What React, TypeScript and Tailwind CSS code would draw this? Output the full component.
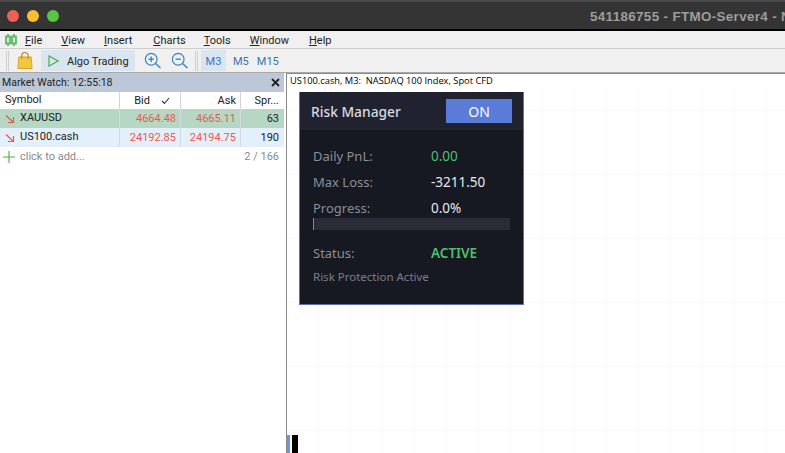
const menus = [
	["F", "ile", "mr-[19px]"],
	["V", "iew", "mr-[19px]"],
	["I", "nsert", "mr-[21px]"],
	["C", "harts", "mr-[18px]"],
	["T", "ools", "mr-[19px]"],
	["W", "indow", "mr-[20px]"],
	["H", "elp", ""]
]

const Zoom = ({ plus }: { plus?: boolean }) => (
	<svg width="18" height="18" viewBox="0 0 20 20" fill="none" stroke="#3f7fb8" strokeWidth="1.3">
		<circle cx="8" cy="8" r="6.5" fill="#eaf3fb" />
		<path d="M5 8h6" strokeWidth="1.5" />
		{plus && <path d="M8 5v6" strokeWidth="1.5" />}
		<path d="M12.8 12.8l5.5 5" strokeWidth="1.6" />
	</svg>
)

const Down = () => (
	<svg width="10" height="10" viewBox="0 0 10 10" fill="none" stroke="#e8554a" strokeWidth="1.1" className="shrink-0">
		<path d="M1 1.5l7 6.5M8.5 3v5.5H3" />
	</svg>
)

const Sep = () => <div className="mx-[2px] h-[20px] w-[3px] border-x border-[#cfcfcf]" />

const Row = ({ symbol, bid, ask, spread, className }: { symbol: string; bid: string; ask: string; spread: string; className: string }) => (
	<div className={`flex h-[19px] items-center text-[11px] ${className}`}>
		<div className="flex w-[119px] items-center pl-[5px]">
			<Down />
			<span className="pl-[5px] text-[#222]">{symbol}</span>
		</div>
		<div className="w-[61px] border-l border-[#d4dbe0] pr-[4px] text-right leading-[19px] text-[#f0584c]">{bid}</div>
		<div className="w-[60px] border-l border-[#d4dbe0] pr-[4px] text-right leading-[19px] text-[#f0584c]">{ask}</div>
		<div className="w-[44px] border-l border-[#d4dbe0] pr-[5px] text-right leading-[19px] text-[#222]">{spread}</div>
	</div>
)

const Stat = ({ label, value, className, labelClass }: { label: string; value: string; className: string; labelClass?: string }) => (
	<div className={`flex items-center ${labelClass ?? ""}`}>
		<div className="w-[118px] pt-[2px] text-[13px] text-[#8b8e98]">{label}</div>
		<div className={`text-[13.5px] ${className}`}>{value}</div>
	</div>
)

const RiskManager = () => (
	<div className="absolute left-[12px] top-[18px] h-[213px] w-[225px] border border-t-0 border-[#5a70b0] bg-[#161922] font-['Noto_Sans',sans-serif]">
		<div className="flex h-[38px] items-center justify-between bg-[#20232f] pl-[11px] pr-[11px]">
			<span className="pt-[3px] text-[13.8px] font-medium text-[#d8dae0]">Risk Manager</span>
			<div className="flex h-[24px] w-[66px] items-center justify-center bg-[#5a7bd8] text-[14px] text-white">ON</div>
		</div>
		<div className="flex flex-col px-[13px]">
			<Stat label="Daily PnL:" value="0.00" className="text-[#4fc06e]" labelClass="mt-[16px] h-[20px]" />
			<Stat label="Max Loss:" value="-3211.50" className="text-[#e8e9ec]" labelClass="mt-[6px] h-[20px]" />
			<Stat label="Progress:" value="0.0%" className="text-[#e8e9ec]" labelClass="mt-[7px] h-[18px]" />
			<div className="mt-[1px] h-[12px] w-[197px] border-l border-[#45b565] bg-[#292c37]" />
			<Stat label="Status:" value="ACTIVE" className="font-semibold text-[#4fc06e]" labelClass="mt-[13px] h-[20px]" />
			<div className="mt-[5px] text-[11.5px] text-[#7b7e89]">Risk Protection Active</div>
		</div>
	</div>
)

export default function App() {
	return (
		<div className="flex h-[453px] w-[785px] flex-col overflow-hidden bg-white font-['Roboto',sans-serif] text-[#222]">
			{/* title bar */}
			<div className="relative flex h-[31px] shrink-0 items-center gap-[8px] border-y-2 border-t-[#4a4a4a] border-b-black bg-[#343434] pl-[7px]">
				<span className="h-[12px] w-[12px] rounded-full bg-[#ee5f57]" />
				<span className="h-[12px] w-[12px] rounded-full bg-[#fdbd2e]" />
				<span className="h-[12px] w-[12px] rounded-full bg-[#58c544]" />
				<span className="absolute left-[590px] top-[5px] whitespace-nowrap font-['Liberation_Sans',sans-serif] text-[13.4px] font-bold tracking-[0.35px] text-[#9d9d9d]">
					541186755 - FTMO-Server4 - N
				</span>
			</div>

			{/* menu */}
			<div className="flex h-[18px] shrink-0 items-center border-b border-[#cfcfcf] bg-[#f0f0f0] text-[11px]">
				<svg width="16" height="14" viewBox="0 0 16 14" className="ml-[3px]" fill="none" stroke="#5fb56a" strokeWidth="1.8">
					<path d="M5 1v12M11 1v12" />
					<rect x="3" y="3.5" width="4" height="7" fill="#cfeccf" />
					<rect x="9" y="3.5" width="4" height="7" fill="#cfeccf" />
				</svg>
				<div className="ml-[6px] flex pt-[3px]">
					{menus.map(([key, rest, gap]) => (
						<span key={key} className={`whitespace-nowrap ${gap}`}>
							<span className="underline">{key}</span>
							{rest}
						</span>
					))}
				</div>
			</div>

			{/* toolbar */}
			<div className="flex h-[24px] shrink-0 items-center border-b border-[#a8a8a8] bg-[#f0f0f0] pl-[4px] text-[11px]">
				<Sep />
				<svg width="16" height="19" viewBox="0 0 18 20" className="ml-[6px]" fill="none">
					<path d="M2 6h14l1 13H1z" fill="#f2c83a" stroke="#d2a020" />
					<path d="M5.5 8V4a3.5 3 0 017 0v4" stroke="#a98218" strokeWidth="1.2" />
				</svg>
				<div className="ml-[8px] flex h-[21px] w-[94px] items-center bg-[#dae5f2] pl-[7px]">
					<svg width="11" height="12" viewBox="0 0 11 12" fill="none" stroke="#48b04c" strokeWidth="1.2">
						<path d="M1 1l9 5-9 5z" />
					</svg>
					<span className="ml-[8px] pt-[3px]">Algo Trading</span>
				</div>
				<div className="ml-[9px] flex gap-[9px]">
					<Zoom plus />
					<Zoom />
				</div>
				<div className="ml-[4px]"><Sep /></div>
				<div className="ml-[1px] flex h-[21px] w-[25px] items-center justify-center bg-[#dae5f2] pt-[3px] text-[#3a73b5]">M3</div>
				<div className="ml-[7px] pt-[3px] text-[#3a73b5]">M5</div>
				<div className="ml-[8px] pt-[3px] text-[#3a73b5]">M15</div>
			</div>

			<div className="flex min-h-0 flex-1">
				{/* market watch */}
				<div className="w-[284px] shrink-0">
					<div className="flex h-[19px] items-center justify-between bg-[#bcc8d8] pl-[2px] pr-[4px] text-[10.5px]">
						<span>Market Watch: 12:55:18</span>
						<svg width="9" height="9" viewBox="0 0 9 9" stroke="#222" strokeWidth="1.8">
							<path d="M1 1l7 7M8 1L1 8" />
						</svg>
					</div>
					<div className="flex h-[17px] items-center text-[11px]">
						<div className="w-[119px] pl-[5px]">Symbol</div>
						<div className="flex w-[61px] items-center justify-end border-l border-[#d4d4d4] pr-[10px] leading-[17px]">
							Bid
							<svg width="9" height="8" viewBox="0 0 9 8" fill="none" stroke="#333" strokeWidth="1.1" className="ml-[11px]">
								<path d="M1 4l2.5 2.5L8 1" />
							</svg>
						</div>
						<div className="w-[60px] border-l border-[#d4d4d4] pr-[4px] text-right leading-[17px]">Ask</div>
						<div className="w-[44px] border-l border-[#d4d4d4] pr-[5px] text-right leading-[17px]">Spr...</div>
					</div>
					<Row symbol="XAUUSD" bid="4664.48" ask="4665.11" spread="63" className="bg-[#b5d7c3]" />
					<Row symbol="US100.cash" bid="24192.85" ask="24194.75" spread="190" className="bg-[#e3effa]" />
					<div className="flex h-[20px] items-center justify-between pl-[3px] pr-[5px] text-[11px] text-[#8a8a8a]">
						<div className="flex items-center">
							<svg width="12" height="12" viewBox="0 0 12 12" stroke="#43b04a" strokeWidth="1.1">
								<path d="M6 0v12M0 6h12" />
							</svg>
							<span className="ml-[5px]">click to add...</span>
						</div>
						<span>2 / 166</span>
					</div>
				</div>

				{/* chart */}
				<div className="relative ml-[2px] flex-1 border-l border-t border-[#8a8a8a] bg-[linear-gradient(#f8f8f8_1px,transparent_1px),linear-gradient(90deg,#f8f8f8_1px,transparent_1px)] bg-[length:32px_64px] bg-[position:31px_36px]">
					<div className="whitespace-pre bg-white pl-[3px] font-['Open_Sans',sans-serif] text-[9.3px] leading-[14px] text-black">US100.cash, M3:  NASDAQ 100 Index, Spot CFD</div>
					<RiskManager />
					<div className="absolute bottom-0 left-0 h-[18px] w-[3px] bg-[#6f94dc]" />
					<div className="absolute bottom-0 left-[5px] h-[18px] w-[6px] bg-black" />
				</div>
			</div>
		</div>
	)
}
